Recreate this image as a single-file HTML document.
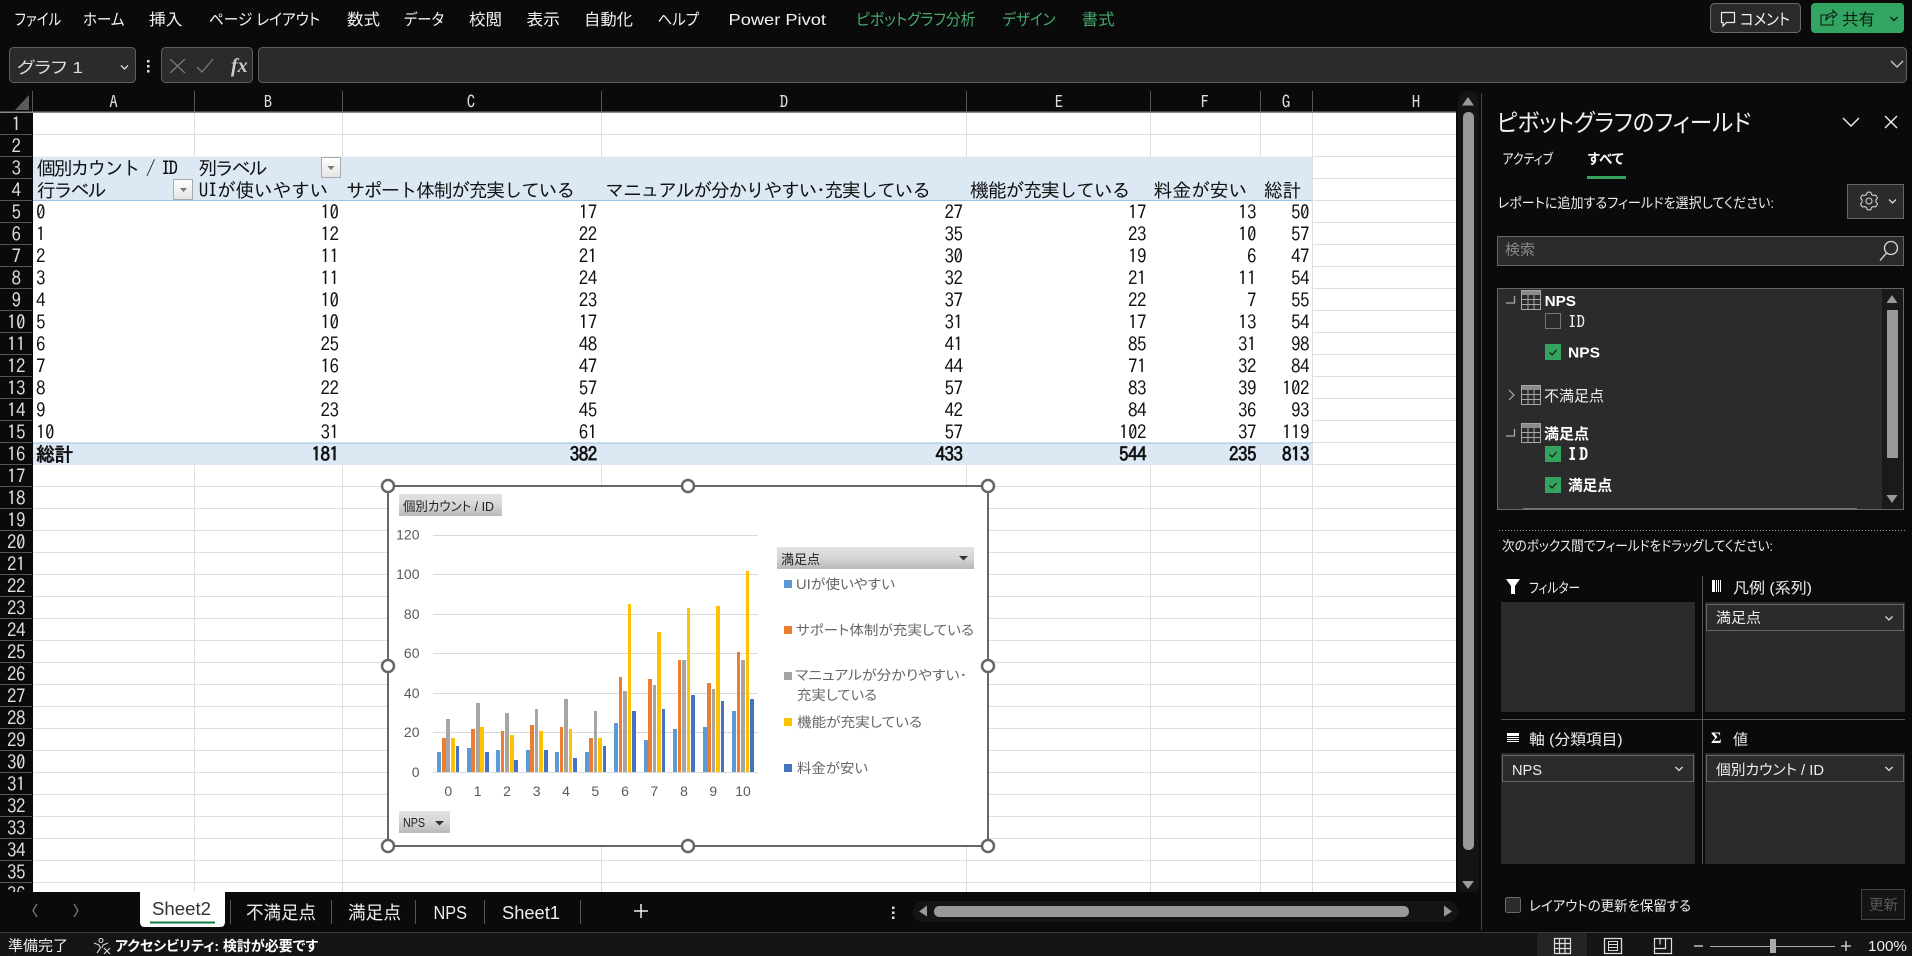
<!DOCTYPE html>
<html lang="ja">
<head>
<meta charset="utf-8">
<title>Excel</title>
<style>
html,body{margin:0;padding:0;background:#0a0a0a;width:1912px;height:956px;overflow:hidden}
svg{display:block}
text{white-space:pre}
.u{font-family:"Liberation Sans","Noto Sans CJK JP",sans-serif;font-feature-settings:"palt";font-size:15px;fill:#eee}
.m{font-size:16px;fill:#f2f2f2}
.gm{font-size:16px;fill:#46a96f}
.g{font-family:"IPAGothic","Liberation Sans",sans-serif;font-size:19px;letter-spacing:-.5px;fill:#111}
.b{font-weight:bold}
.r{font-family:"IPAGothic","Liberation Sans",sans-serif;font-size:19px;letter-spacing:-.5px;fill:#ddd;text-anchor:middle}
.c{font-family:"IPAGothic","Liberation Sans",sans-serif;font-size:17px;fill:#ddd;text-anchor:middle}
.a{font-family:"Liberation Sans",sans-serif;font-size:14px;fill:#595959}
.l{font-family:"Liberation Sans","Noto Sans CJK JP",sans-serif;font-feature-settings:"palt";font-size:13.5px;fill:#666}
.i{font-family:"Liberation Sans","Noto Sans CJK JP",sans-serif;font-feature-settings:"palt";font-size:13px;fill:#222}
.t{font-size:18px;fill:#eee}
</style>
</head>
<body>
<svg xmlns="http://www.w3.org/2000/svg" width="1912" height="956" viewBox="0 0 1912 956">
<defs>
<pattern id="hl" patternUnits="userSpaceOnUse" x="0" y="134" width="1912" height="22"><rect x="0" y="0" width="1912" height="1" fill="#dedede"/></pattern>
<pattern id="hr" patternUnits="userSpaceOnUse" x="0" y="134" width="40" height="22"><rect x="0" y="0" width="40" height="1" fill="#555"/></pattern>
<linearGradient id="btn" x1="0" y1="0" x2="0" y2="1"><stop offset="0" stop-color="#e2e2e2"/><stop offset=".5" stop-color="#d6d6d6"/><stop offset="1" stop-color="#b8b8b8"/></linearGradient>
<linearGradient id="dd" x1="0" y1="0" x2="0" y2="1"><stop offset="0" stop-color="#fff"/><stop offset="1" stop-color="#e4e4e4"/></linearGradient>
<g id="tb"><rect x=".5" y=".5" width="19" height="19" fill="#2b2b2b" stroke="#a8a8a8"/><rect x="1" y="1" width="18" height="4" fill="#8a8a8a"/><path d="M1 9.5H19M1 14.5H19M7 5V19M13 5V19" stroke="#a8a8a8" fill="none"/></g>
<g id="ck"><rect width="16" height="16" fill="#33a35f"/><path d="M4.5 8.5l2.6 2.4 4.6-5" stroke="#0d2014" stroke-width="1.2" fill="none"/></g>
<g id="chv"><path d="M-3.5 -1.5L0 2L3.5 -1.5" stroke="#ddd" stroke-width="1.3" fill="none"/></g>
<g id="hd"><circle r="6" fill="#fff" stroke="#666" stroke-width="2.5"/></g>
</defs>

<!-- base -->
<rect width="1912" height="956" fill="#0a0a0a"/>

<!-- menu -->
<g class="u m">
<text x="14.7" y="25" textLength="46.5" lengthAdjust="spacingAndGlyphs">ファイル</text>
<text x="83" y="25" textLength="41.5" lengthAdjust="spacingAndGlyphs">ホーム</text>
<text x="149" y="25" textLength="33.5" lengthAdjust="spacingAndGlyphs">挿入</text>
<text x="209" y="25" textLength="111" lengthAdjust="spacingAndGlyphs">ページ レイアウト</text>
<text x="347" y="25" textLength="33" lengthAdjust="spacingAndGlyphs">数式</text>
<text x="404" y="25" textLength="40" lengthAdjust="spacingAndGlyphs">データ</text>
<text x="469" y="25" textLength="33" lengthAdjust="spacingAndGlyphs">校閲</text>
<text x="526.5" y="25" textLength="33.5" lengthAdjust="spacingAndGlyphs">表示</text>
<text x="584" y="25" textLength="49" lengthAdjust="spacingAndGlyphs">自動化</text>
<text x="657.5" y="25" textLength="41.5" lengthAdjust="spacingAndGlyphs">ヘルプ</text>
<text x="728.5" y="25" textLength="97.5" lengthAdjust="spacingAndGlyphs">Power Pivot</text>
</g>
<g class="u gm">
<text x="856" y="25" textLength="119.5" lengthAdjust="spacingAndGlyphs">ピボットグラフ分析</text>
<text x="1002.5" y="25" textLength="53" lengthAdjust="spacingAndGlyphs">デザイン</text>
<text x="1081.6" y="25" textLength="33" lengthAdjust="spacingAndGlyphs">書式</text>
</g>

<!-- comment / share -->
<rect x="1710.5" y="3.5" width="90" height="29" rx="4" fill="#2a2a2a" stroke="#6a6a6a"/>
<path d="M1721.5 12.5h13v10h-8l-3.5 3.5v-3.5h-1.5z" fill="none" stroke="#eee" stroke-width="1.2"/>
<text class="u m" x="1740" y="25" textLength="50" lengthAdjust="spacingAndGlyphs">コメント</text>
<rect x="1811" y="3" width="93" height="30" rx="4" fill="#33a562"/>
<path d="M1828 15h-7v10h12v-5M1826 20c0-4 3-7 7-7v-2.500l4 4-4 3.500v-2.500c-2 0-5 2-7 4.500z" fill="none" stroke="#0b1f12" stroke-width="1.1"/>
<text class="u" style="font-size:16px;fill:#0b1f12" x="1842" y="25" textLength="33" lengthAdjust="spacingAndGlyphs">共有</text>
<path d="M1890.500 17l3.500 3.500 3.500-3.500" stroke="#0b1f12" stroke-width="1.400" fill="none"/>

<!-- formula bar -->
<rect x="9.500" y="47.500" width="126" height="35" rx="4" fill="#2b2b2b" stroke="#5e5e5e"/>
<text class="u" style="font-size:16px;fill:#ddd" x="17" y="73" textLength="66" lengthAdjust="spacingAndGlyphs">グラフ 1</text>
<use href="#chv" x="124.500" y="67"/>
<rect x="147" y="60" width="2.500" height="2.500" fill="#ddd"/><rect x="147" y="65" width="2.500" height="2.500" fill="#ddd"/><rect x="147" y="70" width="2.500" height="2.500" fill="#ddd"/>
<rect x="161.500" y="47.500" width="91" height="35" rx="4" fill="#2b2b2b" stroke="#5e5e5e"/>
<path d="M170 59l15 14M185 59l-15 14" stroke="#777" stroke-width="1.300" fill="none"/>
<path d="M197 67l5 5 11-13" stroke="#777" stroke-width="1.300" fill="none"/>
<text x="231" y="72" style="font-family:'Liberation Serif',serif;font-style:italic;font-weight:bold;font-size:20px;fill:#ccc">fx</text>
<rect x="258.500" y="47.500" width="1648" height="35" rx="4" fill="#2b2b2b" stroke="#5e5e5e"/>
<path d="M1891 61l6 6 6-6" stroke="#ccc" stroke-width="1.300" fill="none"/>

<!-- column headers -->
<path d="M29 95V110H15z" fill="#5a5a5a"/>
<path d="M32.500 91V112M194.500 91V112M342.500 91V112M601.500 91V112M966.500 91V112M1150.500 91V112M1260.500 91V112M1312.500 91V112" stroke="#555"/>
<g class="c">
<text x="113.500" y="108">A</text><text x="268" y="108">B</text><text x="471" y="108">C</text><text x="784" y="108">D</text><text x="1059" y="108">E</text><text x="1205" y="108">F</text><text x="1286" y="108">G</text><text x="1416" y="108">H</text>
</g>
<rect x="0" y="111.500" width="1456" height="1.500" fill="#8a8a8a"/>

<!-- sheet -->
<rect x="33" y="113" width="1423" height="779" fill="#fff"/>
<rect x="33" y="113" width="1423" height="43" fill="url(#hl)"/>
<rect x="1312" y="156" width="144" height="309" fill="url(#hl)"/>
<rect x="33" y="465" width="1423" height="427" fill="url(#hl)"/>
<path d="M194.500 113V156M342.500 113V156M601.500 113V156M966.500 113V156M1150.500 113V156M1260.500 113V156M194.500 465V892M342.500 465V892M601.500 465V892M966.500 465V892M1150.500 465V892M1260.500 465V892M1312.500 113V892" stroke="#dedede"/>

<!-- pivot styling -->
<rect x="33" y="156.500" width="1279" height="44" fill="#dce9f5"/>
<rect x="33" y="200" width="1279" height="1" fill="#9bc2e6"/>
<rect x="33" y="443" width="1279" height="22" fill="#dce9f5"/>
<rect x="33" y="442.500" width="1279" height="1" fill="#9bc2e6"/>

<!-- row header -->
<rect x="0" y="113" width="32" height="779" fill="#0a0a0a"/>
<rect x="0" y="113" width="32" height="779" fill="url(#hr)"/>
<g class="r">
<text x="16" y="131">1</text><text x="16" y="153">2</text><text x="16" y="175">3</text><text x="16" y="197">4</text><text x="16" y="219">5</text><text x="16" y="241">6</text><text x="16" y="263">7</text><text x="16" y="285">8</text><text x="16" y="307">9</text><text x="16" y="329">10</text><text x="16" y="351">11</text><text x="16" y="373">12</text><text x="16" y="395">13</text><text x="16" y="417">14</text><text x="16" y="439">15</text><text x="16" y="461">16</text><text x="16" y="483">17</text><text x="16" y="505">18</text><text x="16" y="527">19</text><text x="16" y="549">20</text><text x="16" y="571">21</text><text x="16" y="593">22</text><text x="16" y="615">23</text><text x="16" y="637">24</text><text x="16" y="659">25</text><text x="16" y="681">26</text><text x="16" y="703">27</text><text x="16" y="725">28</text><text x="16" y="747">29</text><text x="16" y="769">30</text><text x="16" y="791">31</text><text x="16" y="813">32</text><text x="16" y="835">33</text><text x="16" y="857">34</text><text x="16" y="879">35</text><text x="16" y="901">36</text>
</g>

<!-- pivot text -->
<g class="g">
<text x="36.700" y="175" textLength="140.800">個別カウント / ID</text>
<text x="198" y="175" textLength="69">列ラベル</text>
<text x="36.700" y="197" textLength="69.300">行ラベル</text>
<text x="198.800" y="197" textLength="129.200">UIが使いやすい</text>
<text x="346" y="197" textLength="228.700">サポート体制が充実している</text>
<text x="605.300" y="197" textLength="325.300">マニュアルが分かりやすい･充実している</text>
<text x="970" y="197" textLength="160">機能が充実している</text>
<text x="1153.500" y="197" textLength="93.500">料金が安い</text>
<text x="1263.700" y="197" textLength="37.300">総計</text>
<text x="36" y="219">0</text><text x="36" y="241">1</text><text x="36" y="263">2</text><text x="36" y="285">3</text><text x="36" y="307">4</text><text x="36" y="329">5</text><text x="36" y="351">6</text><text x="36" y="373">7</text><text x="36" y="395">8</text><text x="36" y="417">9</text><text x="36" y="439">10</text>
<text x="36" y="461" class="b" textLength="37">総計</text>
</g>
<g class="g" text-anchor="end">
<text y="219"><tspan x="338.500">10</tspan><tspan x="596.700">17</tspan><tspan x="962.500">27</tspan><tspan x="1146">17</tspan><tspan x="1256">13</tspan><tspan x="1309">50</tspan></text>
<text y="241"><tspan x="338.500">12</tspan><tspan x="596.700">22</tspan><tspan x="962.500">35</tspan><tspan x="1146">23</tspan><tspan x="1256">10</tspan><tspan x="1309">57</tspan></text>
<text y="263"><tspan x="338.500">11</tspan><tspan x="596.700">21</tspan><tspan x="962.500">30</tspan><tspan x="1146">19</tspan><tspan x="1256">6</tspan><tspan x="1309">47</tspan></text>
<text y="285"><tspan x="338.500">11</tspan><tspan x="596.700">24</tspan><tspan x="962.500">32</tspan><tspan x="1146">21</tspan><tspan x="1256">11</tspan><tspan x="1309">54</tspan></text>
<text y="307"><tspan x="338.500">10</tspan><tspan x="596.700">23</tspan><tspan x="962.500">37</tspan><tspan x="1146">22</tspan><tspan x="1256">7</tspan><tspan x="1309">55</tspan></text>
<text y="329"><tspan x="338.500">10</tspan><tspan x="596.700">17</tspan><tspan x="962.500">31</tspan><tspan x="1146">17</tspan><tspan x="1256">13</tspan><tspan x="1309">54</tspan></text>
<text y="351"><tspan x="338.500">25</tspan><tspan x="596.700">48</tspan><tspan x="962.500">41</tspan><tspan x="1146">85</tspan><tspan x="1256">31</tspan><tspan x="1309">98</tspan></text>
<text y="373"><tspan x="338.500">16</tspan><tspan x="596.700">47</tspan><tspan x="962.500">44</tspan><tspan x="1146">71</tspan><tspan x="1256">32</tspan><tspan x="1309">84</tspan></text>
<text y="395"><tspan x="338.500">22</tspan><tspan x="596.700">57</tspan><tspan x="962.500">57</tspan><tspan x="1146">83</tspan><tspan x="1256">39</tspan><tspan x="1309">102</tspan></text>
<text y="417"><tspan x="338.500">23</tspan><tspan x="596.700">45</tspan><tspan x="962.500">42</tspan><tspan x="1146">84</tspan><tspan x="1256">36</tspan><tspan x="1309">93</tspan></text>
<text y="439"><tspan x="338.500">31</tspan><tspan x="596.700">61</tspan><tspan x="962.500">57</tspan><tspan x="1146">102</tspan><tspan x="1256">37</tspan><tspan x="1309">119</tspan></text>
<text y="461" class="b"><tspan x="338.500">181</tspan><tspan x="596.700">382</tspan><tspan x="962.500">433</tspan><tspan x="1146">544</tspan><tspan x="1256">235</tspan><tspan x="1309">813</tspan></text>
</g>
<!-- pivot dropdowns -->
<rect x="321.500" y="157.500" width="19" height="20" fill="url(#dd)" stroke="#aaa"/><path d="M327.500 166h7l-3.500 4z" fill="#777"/>
<rect x="173.500" y="179.500" width="19" height="20" fill="url(#dd)" stroke="#aaa"/><path d="M180 188h7l-3.500 4z" fill="#777"/>

<!-- chart -->
<rect x="388" y="486" width="600" height="360" fill="#fff" stroke="#666" stroke-width="2"/>
<rect x="399" y="494" width="103" height="22" fill="url(#btn)"/>
<text class="i" x="403" y="511" textLength="91" lengthAdjust="spacingAndGlyphs">個別カウント / ID</text>
<path d="M433 535.500H758M433 574.500H758M433 614.500H758M433 653.500H758M433 693.500H758M433 732.500H758M433 772.500H758" stroke="#d9d9d9"/>
<g class="a" text-anchor="end">
<text x="419.500" y="539.500">120</text><text x="419.500" y="579">100</text><text x="419.500" y="619">80</text><text x="419.500" y="658">60</text><text x="419.500" y="698">40</text><text x="419.500" y="737">20</text><text x="419.500" y="777">0</text>
</g>
<g class="a" text-anchor="middle">
<text x="448.300" y="796">0</text><text x="477.700" y="796">1</text><text x="507" y="796">2</text><text x="536.700" y="796">3</text><text x="566" y="796">4</text><text x="595.300" y="796">5</text><text x="625" y="796">6</text><text x="654.300" y="796">7</text><text x="684" y="796">8</text><text x="713.300" y="796">9</text><text x="743" y="796">10</text>
</g>
<g transform="translate(0,772) scale(1,-1)" shape-rendering="crispEdges">
<g fill="#5b9bd5">
<rect x="437" width="4" height="20"/><rect x="467" width="4" height="24"/><rect x="496" width="4" height="22"/><rect x="526" width="4" height="22"/><rect x="555" width="4" height="20"/><rect x="585" width="4" height="20"/><rect x="614" width="4" height="49"/><rect x="644" width="4" height="32"/><rect x="673" width="4" height="43"/><rect x="703" width="4" height="45"/><rect x="732" width="4" height="61"/>
</g>
<g fill="#ed7d31">
<rect x="442" width="4" height="34"/><rect x="471" width="4" height="43"/><rect x="501" width="3" height="41"/><rect x="530" width="4" height="47"/><rect x="560" width="3" height="45"/><rect x="589" width="4" height="34"/><rect x="619" width="3" height="95"/><rect x="648" width="4" height="93"/><rect x="678" width="3" height="112"/><rect x="707" width="4" height="89"/><rect x="737" width="3" height="120"/>
</g>
<g fill="#a5a5a5">
<rect x="446" width="4" height="53"/><rect x="476" width="4" height="69"/><rect x="505" width="4" height="59"/><rect x="535" width="3" height="63"/><rect x="564" width="4" height="73"/><rect x="594" width="3" height="61"/><rect x="623" width="4" height="81"/><rect x="653" width="3" height="87"/><rect x="682" width="4" height="112"/><rect x="712" width="3" height="83"/><rect x="741" width="4" height="112"/>
</g>
<g fill="#ffc000">
<rect x="451" width="4" height="34"/><rect x="480" width="4" height="45"/><rect x="510" width="4" height="37"/><rect x="539" width="4" height="41"/><rect x="569" width="3" height="43"/><rect x="598" width="4" height="34"/><rect x="628" width="3" height="168"/><rect x="657" width="4" height="140"/><rect x="687" width="3" height="164"/><rect x="716" width="4" height="166"/><rect x="746" width="3" height="201"/>
</g>
<g fill="#4472c4">
<rect x="456" width="3" height="26"/><rect x="485" width="4" height="20"/><rect x="514" width="4" height="12"/><rect x="544" width="4" height="22"/><rect x="573" width="4" height="14"/><rect x="603" width="3" height="26"/><rect x="632" width="4" height="61"/><rect x="662" width="3" height="63"/><rect x="691" width="4" height="77"/><rect x="721" width="3" height="71"/><rect x="750" width="4" height="73"/>
</g>
</g>
<rect x="399" y="811" width="51" height="22" fill="url(#btn)"/>
<text class="i" x="403" y="827" textLength="22" lengthAdjust="spacingAndGlyphs">NPS</text>
<path d="M435 821h9l-4.500 4.500z" fill="#333"/>
<rect x="777" y="547" width="197" height="22" fill="url(#btn)"/>
<text class="i" x="781" y="564" textLength="39" lengthAdjust="spacingAndGlyphs">満足点</text>
<path d="M959 556h9l-4.500 4.500z" fill="#333"/>
<rect x="784" y="580" width="8" height="8" fill="#5b9bd5"/>
<rect x="784" y="626" width="8" height="8" fill="#ed7d31"/>
<rect x="784" y="672" width="8" height="8" fill="#a5a5a5"/>
<rect x="784" y="718" width="8" height="8" fill="#ffc000"/>
<rect x="784" y="764" width="8" height="8" fill="#4472c4"/>
<g class="l">
<text x="796" y="589" textLength="99" lengthAdjust="spacingAndGlyphs">UIが使いやすい</text>
<text x="796" y="635" textLength="178" lengthAdjust="spacingAndGlyphs">サポート体制が充実している</text>
<text x="795" y="680" textLength="172" lengthAdjust="spacingAndGlyphs">マニュアルが分かりやすい･</text>
<text x="797" y="700" textLength="80" lengthAdjust="spacingAndGlyphs">充実している</text>
<text x="797" y="727" textLength="125" lengthAdjust="spacingAndGlyphs">機能が充実している</text>
<text x="797" y="773" textLength="71" lengthAdjust="spacingAndGlyphs">料金が安い</text>
</g>
<use href="#hd" x="388" y="486"/><use href="#hd" x="688" y="486"/><use href="#hd" x="988" y="486"/>
<use href="#hd" x="388" y="666"/><use href="#hd" x="988" y="666"/>
<use href="#hd" x="388" y="846"/><use href="#hd" x="688" y="846"/><use href="#hd" x="988" y="846"/>

<!-- vertical scrollbar -->
<rect x="1458" y="91" width="21" height="804" rx="10" fill="#141414"/>
<path d="M1468 97l6 8.500h-12z" fill="#999"/>
<rect x="1463" y="112" width="11" height="738" rx="5" fill="#999"/>
<path d="M1462 881h12l-6 8z" fill="#999"/>

<!-- tab bar -->
<rect x="0" y="892" width="1481" height="40" fill="#0a0a0a"/>
<path d="M140 892H225V922q0 5-5 5H145q-5 0-5-5z" fill="#fff"/>
<text class="u t" x="152" y="915" style="fill:#333" textLength="59" lengthAdjust="spacingAndGlyphs">Sheet2</text>
<rect x="150" y="921.500" width="65" height="2" fill="#107c41"/>
<path d="M37 904l-4 6.500 4 6.500M74 904l4 6.500-4 6.500" stroke="#777" stroke-width="1.300" fill="none"/>
<path d="M230.500 900V924M331.500 900V924M415.500 900V924M484.500 900V924M580.500 900V924" stroke="#555"/>
<g class="u t">
<text x="246" y="919" textLength="70" lengthAdjust="spacingAndGlyphs">不満足点</text>
<text x="348" y="919" textLength="53" lengthAdjust="spacingAndGlyphs">満足点</text>
<text x="433.500" y="919" textLength="33.500" lengthAdjust="spacingAndGlyphs">NPS</text>
<text x="502" y="919" textLength="58" lengthAdjust="spacingAndGlyphs">Sheet1</text>
</g>
<path d="M634 911h14M641 904v14" stroke="#eee" stroke-width="1.500"/>
<rect x="892" y="906.500" width="2.500" height="2.500" fill="#ddd"/><rect x="892" y="911.500" width="2.500" height="2.500" fill="#ddd"/><rect x="892" y="916.500" width="2.500" height="2.500" fill="#ddd"/>
<rect x="913" y="901" width="545" height="21" rx="10" fill="#141414"/>
<path d="M919 911.500l8-6v11z" fill="#999"/>
<rect x="934" y="906" width="475" height="11" rx="5" fill="#999"/>
<path d="M1452 911.500l-8-6v11z" fill="#999"/>

<!-- task pane -->
<rect x="1481" y="93" width="1" height="837" fill="#444"/>
<text class="u" style="font-size:24px;fill:#f2f2f2" x="1496.500" y="131" textLength="254.500" lengthAdjust="spacingAndGlyphs">ピボットグラフのフィールド</text>
<path d="M1843 118l8 8 8-8" stroke="#eee" stroke-width="1.400" fill="none"/>
<path d="M1885 116l12 12M1897 116l-12 12" stroke="#eee" stroke-width="1.400" fill="none"/>
<text class="u" style="font-size:14px" x="1502.600" y="164" textLength="50.400" lengthAdjust="spacingAndGlyphs">アクティブ</text>
<text class="u b" style="font-size:14px;fill:#fff" x="1587.700" y="164" textLength="35.800" lengthAdjust="spacingAndGlyphs">すべて</text>
<rect x="1587" y="176" width="39" height="3" fill="#33a35f"/>
<text class="u" style="font-size:14px" x="1497.700" y="208" textLength="276.300" lengthAdjust="spacingAndGlyphs">レポートに追加するフィールドを選択してください:</text>
<rect x="1847.500" y="184.500" width="56" height="34" fill="#2b2b2b" stroke="#666"/>
<g transform="translate(1869 201)" fill="none" stroke="#ccc" stroke-width="1.100" stroke-linejoin="round">
<path d="M1.72-8.83L-1.72-8.83L-2.62-6.49L-4.31-5.52L-6.79-5.90L-8.51-2.93L-6.93-.97L-6.93 .97L-8.51 2.93L-6.79 5.90L-4.31 5.52L-2.62 6.49L-1.72 8.83L1.72 8.83L2.62 6.49L4.31 5.52L6.79 5.90L8.51 2.93L6.93 .97L6.93-.97L8.51-2.93L6.79-5.90L4.31-5.52L2.62-6.49Z"/>
<circle r="3"/>
</g>
<use href="#chv" x="1892.500" y="201"/>
<rect x="1497.500" y="236.500" width="406" height="29" fill="#2b2b2b" stroke="#666"/>
<text class="u" style="font-size:14.500px;fill:#888" x="1505" y="255" textLength="30" lengthAdjust="spacingAndGlyphs">検索</text>
<circle cx="1891" cy="248" r="6.500" fill="none" stroke="#ddd" stroke-width="1.300"/>
<path d="M1886.500 253l-6.500 7.500" stroke="#ddd" stroke-width="1.300"/>

<!-- field list -->
<rect x="1497.500" y="288.500" width="406" height="221" fill="#2b2b2b" stroke="#666"/>
<rect x="1882" y="289" width="21" height="220" fill="#1a1a1a"/>
<path d="M1892 295l5.500 8h-11z" fill="#999"/>
<rect x="1887" y="310" width="11" height="148" fill="#999"/>
<path d="M1886.500 495h11l-5.500 8z" fill="#999"/>
<rect x="1523" y="508" width="334" height="1.500" fill="#777"/>
<path d="M1506 303h8.500v-7" stroke="#aaa" stroke-width="1.300" fill="none"/>
<use href="#tb" x="1521" y="290"/>
<text class="u b" style="font-size:15px;fill:#fff" x="1544.600" y="306" textLength="31.400" lengthAdjust="spacingAndGlyphs">NPS</text>
<rect x="1545.500" y="313.500" width="15" height="15" fill="none" stroke="#777"/>
<text x="1568" y="328" textLength="17" style="font-family:IPAGothic,'Liberation Sans',sans-serif;font-size:17px;fill:#eee">ID</text>
<use href="#ck" x="1545" y="344"/>
<text class="u b" style="font-size:15px;fill:#fff" x="1568" y="357.700" textLength="32" lengthAdjust="spacingAndGlyphs">NPS</text>
<path d="M1509 390l5 5-5 5" stroke="#aaa" stroke-width="1.200" fill="none"/>
<use href="#tb" x="1521" y="385"/>
<text class="u" style="font-size:15px" x="1544" y="401" textLength="60" lengthAdjust="spacingAndGlyphs">不満足点</text>
<path d="M1506 436h8.500v-7" stroke="#aaa" stroke-width="1.300" fill="none"/>
<use href="#tb" x="1521" y="423"/>
<text class="u b" style="font-size:15px;fill:#fff" x="1544" y="439" textLength="45" lengthAdjust="spacingAndGlyphs">満足点</text>
<use href="#ck" x="1545" y="446"/>
<text class="b" x="1568" y="460.500" textLength="20" style="font-family:IPAGothic,'Liberation Sans',sans-serif;font-size:17px;fill:#fff">ID</text>
<use href="#ck" x="1545" y="477"/>
<text class="u b" style="font-size:15px;fill:#fff" x="1568" y="490.700" textLength="44" lengthAdjust="spacingAndGlyphs">満足点</text>

<line x1="1499" y1="530.500" x2="1907" y2="530.500" stroke="#999" stroke-dasharray="1 2"/>
<text class="u" style="font-size:14px" x="1502" y="551" textLength="271" lengthAdjust="spacingAndGlyphs">次のボックス間でフィールドをドラッグしてください:</text>

<!-- areas -->
<rect x="1702" y="576" width="1" height="288" fill="#555"/>
<rect x="1501" y="719" width="404" height="1" fill="#555"/>
<path d="M1506 579h14l-5 7v8h-4v-8z" fill="#fff"/>
<text class="u" style="font-size:14px" x="1529" y="593" textLength="51" lengthAdjust="spacingAndGlyphs">フィルター</text>
<path d="M1712 580h3v12h-3zM1716 580h1v12h-1zM1718 580h1v12h-1zM1720 580h1v12h-1z" fill="#fff"/>
<text class="u" style="font-size:15px" x="1733" y="593" textLength="79" lengthAdjust="spacingAndGlyphs">凡例 (系列)</text>
<rect x="1501" y="602" width="194" height="110" fill="#2b2b2b"/>
<rect x="1705" y="602" width="200" height="110" fill="#2b2b2b"/>
<rect x="1706.500" y="604.500" width="197" height="26" fill="#2b2b2b" stroke="#666"/>
<text class="u" style="font-size:14.500px" x="1716" y="623" textLength="45" lengthAdjust="spacingAndGlyphs">満足点</text>
<use href="#chv" x="1889" y="618"/>
<path d="M1507 733h12v3h-12zM1507 737h12v1h-12zM1507 739h12v1h-12zM1507 741h12v1h-12z" fill="#fff"/>
<text class="u" style="font-size:15px" x="1529" y="744.300" textLength="93.700" lengthAdjust="spacingAndGlyphs">軸 (分類項目)</text>
<text x="1711" y="743" style="font-family:'Liberation Serif',serif;font-weight:bold;font-size:16px;fill:#fff">Σ</text>
<text class="u" style="font-size:15px" x="1733" y="744.300" textLength="15" lengthAdjust="spacingAndGlyphs">値</text>
<rect x="1501" y="753" width="194" height="111" fill="#2b2b2b"/>
<rect x="1705" y="753" width="200" height="111" fill="#2b2b2b"/>
<rect x="1502.500" y="755.500" width="191" height="26" fill="#2b2b2b" stroke="#666"/>
<text class="u" style="font-size:14.500px" x="1512" y="775" textLength="30" lengthAdjust="spacingAndGlyphs">NPS</text>
<use href="#chv" x="1679" y="768.500"/>
<rect x="1706.500" y="755.500" width="197" height="26" fill="#2b2b2b" stroke="#666"/>
<text class="u" style="font-size:14.500px" x="1716" y="775" textLength="108" lengthAdjust="spacingAndGlyphs">個別カウント / ID</text>
<use href="#chv" x="1889" y="768.500"/>

<rect x="1505.500" y="897.500" width="15" height="15" rx="2" fill="#2b2b2b" stroke="#6a6a6a"/>
<text class="u" style="font-size:14px" x="1529" y="911" textLength="162" lengthAdjust="spacingAndGlyphs">レイアウトの更新を保留する</text>
<rect x="1861.500" y="889.500" width="43" height="30" fill="#141414" stroke="#444"/>
<text class="u" style="font-size:14.500px;fill:#5a5a5a" x="1869" y="910" textLength="29" lengthAdjust="spacingAndGlyphs">更新</text>

<!-- status bar -->
<rect x="0" y="932" width="1912" height="24" fill="#151515"/>
<rect x="0" y="932" width="1912" height="1" fill="#3a3a3a"/>
<text class="u" style="font-size:14.500px" x="8" y="951" textLength="60" lengthAdjust="spacingAndGlyphs">準備完了</text>
<circle cx="101" cy="940.500" r="2" fill="none" stroke="#ddd"/>
<path d="M94 943l5 2 1.500 3-3.500 5M108 943l-5 2-1 3M104 948l6 6M110 948l-6 6" stroke="#ddd" stroke-width="1.100" fill="none"/>
<text class="u b" style="font-size:14px;fill:#fff" x="115" y="951" textLength="203" lengthAdjust="spacingAndGlyphs">アクセシビリティ: 検討が必要です</text>
<rect x="1537" y="933" width="50" height="23" fill="#242424"/>
<path d="M1554.500 938.500h16v15h-16zM1559.500 938.500v15M1565 938.500v15M1554.500 943.500h16M1554.500 948.500h16" fill="none" stroke="#ddd" stroke-width="1.200"/>
<path d="M1604.500 938.500h17v15h-17z" fill="none" stroke="#ddd" stroke-width="1.300"/>
<path d="M1608.500 941.500h9v9h-9zM1608.500 944.500h9M1608.500 947.500h9" fill="none" stroke="#ddd"/>
<path d="M1654.500 938.500h17v15h-17zM1654.500 948.500h11v-10M1660 938.500v6" fill="none" stroke="#ddd" stroke-width="1.200"/>
<path d="M1694 946h9" stroke="#ddd" stroke-width="1.300"/>
<rect x="1710" y="946" width="125" height="1" fill="#aaa"/>
<rect x="1770" y="939" width="6" height="14" fill="#aaa"/>
<path d="M1841 946h10M1846 941v10" stroke="#ddd" stroke-width="1.300"/>
<text class="u" style="font-size:14.500px" x="1868" y="951" textLength="39" lengthAdjust="spacingAndGlyphs">100%</text>
</svg>
</body>
</html>
